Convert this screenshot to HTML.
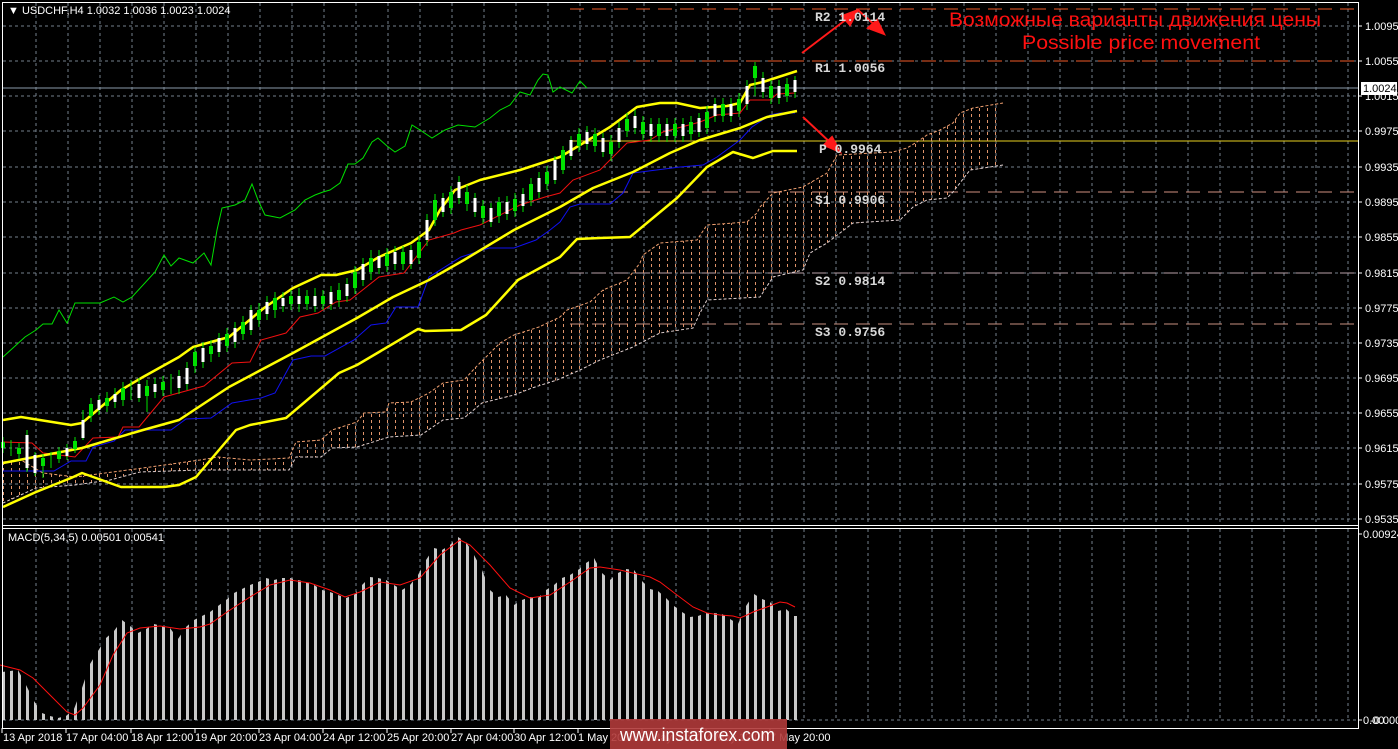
<!DOCTYPE html>
<html><head><meta charset="utf-8"><style>
html,body{margin:0;padding:0;background:#000;}
svg{display:block;}
text{font-family:"Liberation Sans","DejaVu Sans",sans-serif;}
text.pv{font-family:"Liberation Mono","DejaVu Sans Mono",monospace;font-weight:bold;font-size:13px;}
</style></head><body>
<svg width="1398" height="749" viewBox="0 0 1398 749" xmlns="http://www.w3.org/2000/svg">
<defs>
<pattern id="cl" width="8" height="6" patternUnits="userSpaceOnUse">
<rect x="3" y="0" width="1" height="3" fill="#e0946a"/>
</pattern>
<pattern id="mb" width="8" height="749" patternUnits="userSpaceOnUse" x="2">
<rect x="0" y="0" width="3" height="749" fill="#c8c8c8"/>
</pattern>
</defs>
<rect width="1398" height="749" fill="#000"/>
<g stroke="#75808c" stroke-width="1" stroke-dasharray="3,3" fill="none">
<path d="M36 3V525M68 3V525M100 3V525M132 3V525M164 3V525M196 3V525M228 3V525M260 3V525M292 3V525M324 3V525M356 3V525M388 3V525M420 3V525M452 3V525M484 3V525M516 3V525M548 3V525M580 3V525M612 3V525M644 3V525M676 3V525M708 3V525M740 3V525M772 3V525M804 3V525M836 3V525M868 3V525M900 3V525M932 3V525M964 3V525M996 3V525M1028 3V525M1060 3V525M1092 3V525M1124 3V525M1156 3V525M1188 3V525M1220 3V525M1252 3V525M1284 3V525M1316 3V525M1348 3V525"/>
<path d="M36 529V720M68 529V720M100 529V720M132 529V720M164 529V720M196 529V720M228 529V720M260 529V720M292 529V720M324 529V720M356 529V720M388 529V720M420 529V720M452 529V720M484 529V720M516 529V720M548 529V720M580 529V720M612 529V720M644 529V720M676 529V720M708 529V720M740 529V720M772 529V720M804 529V720M836 529V720M868 529V720M900 529V720M932 529V720M964 529V720M996 529V720M1028 529V720M1060 529V720M1092 529V720M1124 529V720M1156 529V720M1188 529V720M1220 529V720M1252 529V720M1284 529V720M1316 529V720M1348 529V720"/>
<path d="M3 26H1358M3 61H1358M3 96H1358M3 131H1358M3 167H1358M3 202H1358M3 237H1358M3 273H1358M3 308H1358M3 343H1358M3 378H1358M3 413H1358M3 448H1358M3 484H1358M3 519H1358M3 720H1358"/>
</g>
<g fill="none" stroke-width="1">
<path d="M570 9H1358M570 61H1358" stroke="#f05a28" stroke-dasharray="14,8"/>
<path d="M570 141H1358" stroke="#e8d020"/>
<path d="M570 192H1358" stroke="#d09080" stroke-dasharray="14,8"/>
<path d="M570 273H1358" stroke="#b8a0a8" stroke-dasharray="14,8"/>
<path d="M570 324H1358" stroke="#c89080" stroke-dasharray="14,8"/>
<path d="M3 88H1358" stroke="#8a9aaa"/>
</g>
<polygon fill="url(#cl)" points="3,462 21,460 43,473 75,477 143,468 200,460 218,457 250,460 289,458 296,442 321,440 332,430 357,422 364,413 386,412 389,403 411,402 429,393 443,383 464,380 475,368 500,343 514,335 539,327 560,317 567,310 590,302 603,290 627,280 640,263 643,255 660,243 697,240 707,225 747,222 757,213 760,207 773,193 803,187 827,173 837,155 893,152 907,148 917,142 927,135 940,130 953,123 960,113 973,108 1003,103 1003,165 970,170 953,192 947,198 927,200 913,207 900,220 853,223 840,233 827,243 810,253 803,270 773,277 760,297 707,300 700,313 693,328 660,333 633,347 600,360 580,370 557,380 532,388 514,395 482,403 464,418 443,420 421,435 389,437 357,447 332,448 321,457 296,457 289,470 200,470 140,472 110,480 75,485 36,488 3,503"/>
<polyline fill="none" stroke="#f0a070" stroke-dasharray="3,2" points="3,462 21,460 43,473 75,477 143,468 200,460 218,457 250,460 289,458 296,442 321,440 332,430 357,422 364,413 386,412 389,403 411,402 429,393 443,383 464,380 475,368 500,343 514,335 539,327 560,317 567,310 590,302 603,290 627,280 640,263 643,255 660,243 697,240 707,225 747,222 757,213 760,207 773,193 803,187 827,173 837,155 893,152 907,148 917,142 927,135 940,130 953,123 960,113 973,108 1003,103"/>
<polyline fill="none" stroke="#e0d0d0" stroke-dasharray="3,2" points="1003,165 970,170 953,192 947,198 927,200 913,207 900,220 853,223 840,233 827,243 810,253 803,270 773,277 760,297 707,300 700,313 693,328 660,333 633,347 600,360 580,370 557,380 532,388 514,395 482,403 464,418 443,420 421,435 389,437 357,447 332,448 321,457 296,457 289,470 200,470 140,472 110,480 75,485 36,488 3,503"/>
<polyline fill="none" stroke="#00e000" stroke-width="1" points="3,357 25,337 36,330 43,324 52,324 59,310 67,323 75,303 100,303 114,297 123,302 132,297 155,272 164,255 171,266 179,258 193,263 204,253 211,265 217,230 222,208 235,205 245,200 252,184 258,200 265,215 280,218 295,210 305,200 315,195 323,192 330,190 340,183 348,164 355,164 363,158 372,142 378,138 387,146 395,152 405,146 412,125 420,130 432,138 445,130 458,125 475,127 490,118 500,110 510,105 520,92 530,95 538,80 543,74 548,75 553,92 560,87 572,93 580,81 587,88"/>
<polyline fill="none" stroke="#1010f0" stroke-width="1" points="3,471 54,471 71,461 86,461 93,447 114,441 125,430 171,430 186,419 211,418 232,403 261,398 275,393 293,360 311,356 325,356 354,340 371,325 386,323 396,307 418,307 429,277 461,257 489,248 514,248 536,240 550,230 560,222 570,207 580,204 610,204 623,193 633,173 680,167 703,165 717,157 740,140 752,127 770,115 780,113 795,113"/>
<polyline fill="none" stroke="#f01010" stroke-width="1" points="3,442 32,443 43,453 75,457 93,438 118,437 123,427 139,427 164,397 204,386 232,363 250,362 261,340 286,333 300,317 318,313 336,302 350,300 379,277 404,273 429,240 454,233 461,230 480,225 520,205 545,197 560,193 573,180 600,170 627,143 650,140 663,132 700,122 717,115 740,113 750,100 770,100 777,94 795,93"/>
<g fill="none" stroke="#ffff00" stroke-width="2.5" stroke-linejoin="round">
<polyline points="3,420 21,417 71,425 82,423 121,390 143,377 179,357 193,347 229,337 264,308 293,288 321,275 336,275 357,270 379,257 411,243 429,230 440,210 455,190 480,180 520,170 560,157 610,127 637,107 660,103 677,103 700,108 727,106 740,103 750,85 763,82 797,71"/>
<polyline points="3,463 82,448 143,430 179,420 229,387 293,353 357,318 393,297 429,280 464,260 514,230 560,207 593,188 633,172 670,153 700,140 740,128 767,117 797,111"/>
<polyline points="3,507 36,492 71,478 82,473 121,487 164,487 179,485 196,477 236,430 250,425 286,418 339,373 357,365 418,329 425,331 461,330 486,315 518,280 560,257 577,239 600,238 630,237 677,198 707,167 733,152 753,158 773,151 797,151"/>
</g>
<path fill="none" stroke="#00e000" stroke-width="1" d="M3 437V453M11 440V456M19 443V459M27 430V472M35 452V476M43 454V478M51 452V468M59 447V463M67 444V460M75 437V453M83 410V440M91 398V422M99 395V415M107 392V412M115 388V408M123 382V406M131 380V400M139 378V402M147 380V412M155 378V398M163 376V396M171 374V394M179 370V394M187 362V390M195 347V373M203 342V368M211 340V362M219 333V357M227 328V352M235 322V348M243 316V340M251 305V335M259 303V327M267 296V320M275 292V318M283 292V312M291 290V310M299 288V312M307 290V310M315 288V312M323 290V310M331 286V310M339 283V307M347 278V302M355 266V294M363 258V286M371 250V280M379 250V274M387 248V272M395 246V270M403 246V270M411 245V269M419 236V264M427 214V246M435 194V226M443 193V217M451 186V214M459 176V204M467 185V211M475 193V217M483 200V224M491 203V227M499 197V223M507 196V220M515 193V217M523 188V212M531 178V206M539 172V198M547 166V190M555 156V184M563 146V174M571 136V160M579 128V152M587 126V150M595 128V152M603 133V157M611 135V161M619 122V148M627 113V137M635 110V134M643 116V140M651 118V142M659 118V142M667 118V142M675 118V142M683 118V142M691 116V140M699 113V137M707 106V134M715 98V122M723 98V122M731 98V122M739 93V117M747 80V110M755 62V96M763 72V98M771 80V104M779 80V104M787 78V102M795 76V98"/>
<path fill="none" stroke="#00e000" stroke-width="4" d="M3 442V448M19 448V454M43 458V466M59 451V459M75 441V449M91 404V416M107 398V406M123 388V400M147 386V396M163 382V390M195 352V366M211 346V354M227 334V346M243 322V334M259 310V320M275 298V310M291 296V304M307 296V304M323 296V304M339 290V300M355 272V288M371 258V272M387 254V266M403 252V264M419 242V258M435 200V220M451 192V208M467 192V204M483 206V218M499 202V216M515 199V211M531 184V200M547 172V184M563 150V170M579 134V146M595 134V146M611 142V154M627 119V131M643 122V134M659 124V136M675 124V136M691 122V134M707 112V128M723 104V116M739 99V111M755 66V78M771 86V98M787 84V96"/>
<path fill="none" stroke="#ffffff" stroke-width="3" d="M27 435V468M35 455V473M67 448V456M83 420V438M99 400V410M115 394V402M139 384V398M155 384V392M179 376V388M187 368V384M203 348V362M219 338V352M235 328V342M251 310V330M267 302V314M283 298V306M299 296V304M315 296V306M331 292V304M347 284V296M363 264V280M379 256V268M395 252V264M411 250V264M427 220V240M443 198V212M459 182V198M475 198V212M491 208V222M507 202V214M523 194V206M539 178V192M555 160V180M571 140V156M587 132V144M603 138V152M619 128V142M635 116V128M651 124V136M667 124V136M683 124V136M699 118V132M715 104V116M731 104V116M747 86V104M763 78V92M779 86V98M795 80V92"/>
<g stroke="#ff1a1a" stroke-width="2" fill="#ff1a1a">
<path d="M802 53L852 15" fill="none"/>
<polygon points="858,10 842,16 850,25"/>
<path d="M858 10L878 28" fill="none"/>
<polygon points="884,34 868,28 877,20"/>
<path d="M803 117L834 146" fill="none"/>
<polygon points="840,152 824,145 832,137"/>
</g>
<g fill="#d8d8d8">
<text class="pv" x="815" y="21">R2 1.0114</text>
<text class="pv" x="815" y="72">R1 1.0056</text>
<text class="pv" x="819" y="153">P 0.9964</text>
<text class="pv" x="815" y="204">S1 0.9906</text>
<text class="pv" x="815" y="285">S2 0.9814</text>
<text class="pv" x="815" y="336">S3 0.9756</text>
</g>
<text x="949" y="26" fill="#ff1010" font-size="19" textLength="372" lengthAdjust="spacingAndGlyphs">Возможные варианты движения цены</text>
<text x="1022" y="49" fill="#ff1010" font-size="19" textLength="238" lengthAdjust="spacingAndGlyphs">Possible price movement</text>
<polygon fill="url(#mb)" points="2,720 2,672 10,671 18,670 26,685 34,701 42,713 50,716 58,718 66,716 74,709 82,688 90,664 98,651 106,638 114,631 122,620 130,626 138,633 146,629 154,624 162,626 170,628 178,639 186,627 194,620 202,616 210,612 218,606 226,600 234,593 242,589 250,585 258,582 266,578 274,580 282,578 290,578 298,580 306,582 314,585 322,590 330,592 338,595 346,598 354,595 362,585 370,577 378,578 386,580 394,585 402,590 410,585 418,575 426,560 434,548 442,550 450,545 458,537 466,542 474,555 482,570 490,590 498,597 506,595 514,605 522,600 530,597 538,598 546,590 554,585 562,578 570,575 578,570 586,563 594,558 602,573 610,580 618,573 626,569 634,570 642,581 650,589 658,591 666,598 674,606 682,612 690,617 698,616 706,613 714,613 722,614 730,619 738,624 746,606 754,594 762,599 770,602 778,611 786,609 794,616 797,616 797,720"/>
<polyline fill="none" stroke="#ff1010" stroke-width="1" points="0,665 20,670 33,678 50,695 67,712 75,715 83,708 100,685 113,655 127,633 140,628 160,626 180,629 200,627 210,624 227,612 250,597 270,585 290,580 310,583 330,590 345,597 360,592 380,582 400,585 420,578 440,555 460,540 470,545 490,565 510,588 530,598 550,595 570,582 590,568 600,567 620,570 650,577 660,582 677,595 693,607 707,613 720,615 733,616 740,618 747,615 753,612 767,607 780,602 787,603 795,607"/>
<g stroke="#ffffff" stroke-width="1" fill="none">
<path d="M2.5 2.5H1358.5V728.5H2.5Z"/>
<path d="M2 525.5H1358M2 528.5H1358"/>
</g>
<path stroke="#fff" d="M1358 26H1362M1358 61H1362M1358 96H1362M1358 131H1362M1358 167H1362M1358 202H1362M1358 237H1362M1358 273H1362M1358 308H1362M1358 343H1362M1358 378H1362M1358 413H1362M1358 448H1362M1358 484H1362M1358 519H1362M1358 534H1362M1358 720H1362M2 728V733M66 728V733M131 728V733M195 728V733M259 728V733M323 728V733M387 728V733M451 728V733M514 728V733M578 728V733M642 728V733M706 728V733M770 728V733"/>
<g fill="#ffffff" font-size="11">
<text x="1365" y="30">1.0095</text>
<text x="1365" y="65">1.0055</text>
<text x="1365" y="100">1.0015</text>
<text x="1365" y="135">0.9975</text>
<text x="1365" y="171">0.9935</text>
<text x="1365" y="206">0.9895</text>
<text x="1365" y="241">0.9855</text>
<text x="1365" y="277">0.9815</text>
<text x="1365" y="312">0.9775</text>
<text x="1365" y="347">0.9735</text>
<text x="1365" y="382">0.9695</text>
<text x="1365" y="417">0.9655</text>
<text x="1365" y="452">0.9615</text>
<text x="1365" y="488">0.9575</text>
<text x="1365" y="523">0.9535</text>
<text x="1363" y="538">0.00924</text>
<text x="1363" y="724">0.00</text>
<text x="1370" y="724">-0.00035</text>
<text x="8" y="14">▼ USDCHF,H4  1.0032 1.0036 1.0023 1.0024</text>
<text x="8" y="541">MACD(5,34,5) 0.00501 0.00541</text>
<text x="3" y="741">13 Apr 2018</text>
<text x="66" y="741">17 Apr 04:00</text>
<text x="131" y="741">18 Apr 12:00</text>
<text x="195" y="741">19 Apr 20:00</text>
<text x="259" y="741">23 Apr 04:00</text>
<text x="323" y="741">24 Apr 12:00</text>
<text x="387" y="741">25 Apr 20:00</text>
<text x="451" y="741">27 Apr 04:00</text>
<text x="514" y="741">30 Apr 12:00</text>
<text x="578" y="741">1 May 20:00</text>
<text x="642" y="741">3 May 04:00</text>
<text x="706" y="741">4 May 12:00</text>
<text x="770" y="741">7 May 20:00</text>
</g>
<rect x="1361" y="82" width="36" height="13" fill="#ffffff"/>
<text x="1363" y="92" fill="#000" font-size="11">1.0024</text>
<rect x="610" y="719" width="177" height="30" fill="#b03a3a" fill-opacity="0.9"/>
<text x="620" y="741" fill="#ffffff" font-size="18" textLength="155" lengthAdjust="spacingAndGlyphs">www.instaforex.com</text>
</svg>
</body></html>
